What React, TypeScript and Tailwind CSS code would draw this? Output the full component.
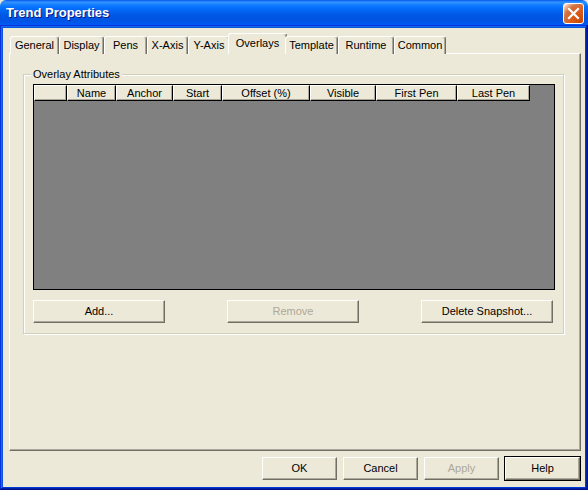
import React from "react";

const font = { fontFamily: '"Liberation Sans", Arial, sans-serif' };

const tabs = ["General", "Display", "Pens", "X-Axis", "Y-Axis", "Overlays", "Template", "Runtime", "Common"];
const tabWidths = [49, 45, 43, 41, 42, 55, 53, 56, 52];

const cols = [
  { label: "", w: 33 },
  { label: "Name", w: 49 },
  { label: "Anchor", w: 57 },
  { label: "Start", w: 49 },
  { label: "Offset (%)", w: 88 },
  { label: "Visible", w: 66 },
  { label: "First Pen", w: 81 },
  { label: "Last Pen", w: 73 },
];

function Btn({ label, w, disabled, def }: { label: string; w: number; disabled?: boolean; def?: boolean }) {
  return (
    <div
      className={
        "h-[23px] flex items-center justify-center text-[11px] bg-[#ECE9D8] border border-t-white border-l-white border-r-[#716F64] border-b-[#716F64] shadow-[inset_-1px_-1px_#ACA899] " +
        (disabled ? "text-[#ACA899]" : "text-black") +
        (def ? " outline outline-1 outline-black" : "")
      }
      style={{ width: w }}
    >
      {label}
    </div>
  );
}

export default function App() {
  return (
    <div className="w-[588px] h-[490px] bg-[#ECE9D8] flex flex-col" style={font}>
      {/* Title bar */}
      <div className="h-[25px] flex items-center justify-between pl-[6px] pr-[4px] rounded-t-[6px] bg-[linear-gradient(to_bottom,#0058ee_0%,#3593ff_8%,#288eff_12%,#127dff_20%,#036ffc_32%,#0262ee_48%,#0057e5_60%,#0054e3_80%,#0055eb_90%,#005bf5_100%)]">
        <span className="text-white font-bold text-[13px] mt-[1px] [text-shadow:1px_1px_#0a1883]">Trend Properties</span>
        <div className="w-[21px] h-[21px] mt-[2px] rounded-[3px] border border-white bg-[radial-gradient(circle_at_90%_90%,#cc4600_0%,#dc6527_55%,#cd7546_70%,#ffccb2_90%,#fff_100%)] flex items-center justify-center">
          <svg width="13" height="13" viewBox="0 0 13 13">
            <path d="M2 2 L11 11 M11 2 L2 11" stroke="white" strokeWidth="2.2" strokeLinecap="square" />
          </svg>
        </div>
      </div>

      {/* Body */}
      <div className="flex-1 flex flex-col shadow-[inset_-1px_-1px_#00138c,inset_1px_1px_#0831d9,inset_-2px_-2px_#001ea0,inset_2px_2px_#166aee,inset_-3px_-3px_#003bda,inset_3px_3px_#0855dd] px-[3px] pb-[3px]">
        {/* Tabs */}
        <div className="flex items-end h-[21px] mt-[8px] pl-[7px] relative z-10 -mb-[1px]">
          {tabs.map((t, i) => {
            const sel = t === "Overlays";
            return (
              <div
                key={t}
                className={
                  "flex items-center justify-center text-[11px] text-black bg-[#ECE9D8] rounded-t-[3px] border-t border-l border-r border-t-white border-l-white border-r-[#716F64] shadow-[inset_-1px_0_#ACA899] " +
                  (sel ? "h-[21px] -mx-[2px] pb-[2px]" : "h-[18px]")
                }
                style={{ width: tabWidths[i] + (sel ? 4 : 0) }}
              >
                {t}
              </div>
            );
          })}
        </div>

        {/* Panel */}
        <div className="ml-[6px] w-[572px] h-[398px] border border-t-white border-l-white border-r-[#716F64] border-b-[#716F64] shadow-[inset_-1px_-1px_#ACA899] pt-[20px] pl-[13px]">
          {/* Group box */}
          <div className="relative w-[541px] h-[260px] border border-[#D0D0BF] shadow-[inset_1px_1px_white,1px_1px_white] pt-[9px] pl-[9px]">
            <span className="absolute left-[7px] -top-[8px] px-[2px] bg-[#ECE9D8] text-[11px] text-black leading-[14px]">
              Overlay Attributes
            </span>
            {/* List view */}
            <div className="w-[522px] h-[206px] bg-[#808080] border border-black">
              <div className="flex h-[16px]">
                {cols.map((c, i) => (
                  <div
                    key={i}
                    className="h-[16px] flex items-center justify-center text-[11px] text-black bg-[#ECE9D8] border border-t-white border-l-white border-r-black border-b-black shadow-[inset_-1px_-1px_#ACA899]"
                    style={{ width: c.w }}
                  >
                    {c.label}
                  </div>
                ))}
              </div>
            </div>
            {/* Buttons */}
            <div className="flex justify-between w-[520px] mt-[10px]">
              <Btn label="Add..." w={132} />
              <Btn label="Remove" w={132} disabled />
              <Btn label="Delete Snapshot..." w={132} />
            </div>
          </div>
        </div>

        {/* Bottom buttons */}
        <div className="flex justify-end gap-[6px] mt-[6px] pr-[5px]">
          <Btn label="OK" w={75} />
          <Btn label="Cancel" w={75} />
          <Btn label="Apply" w={75} disabled />
          <Btn label="Help" w={75} def />
        </div>
      </div>
    </div>
  );
}
